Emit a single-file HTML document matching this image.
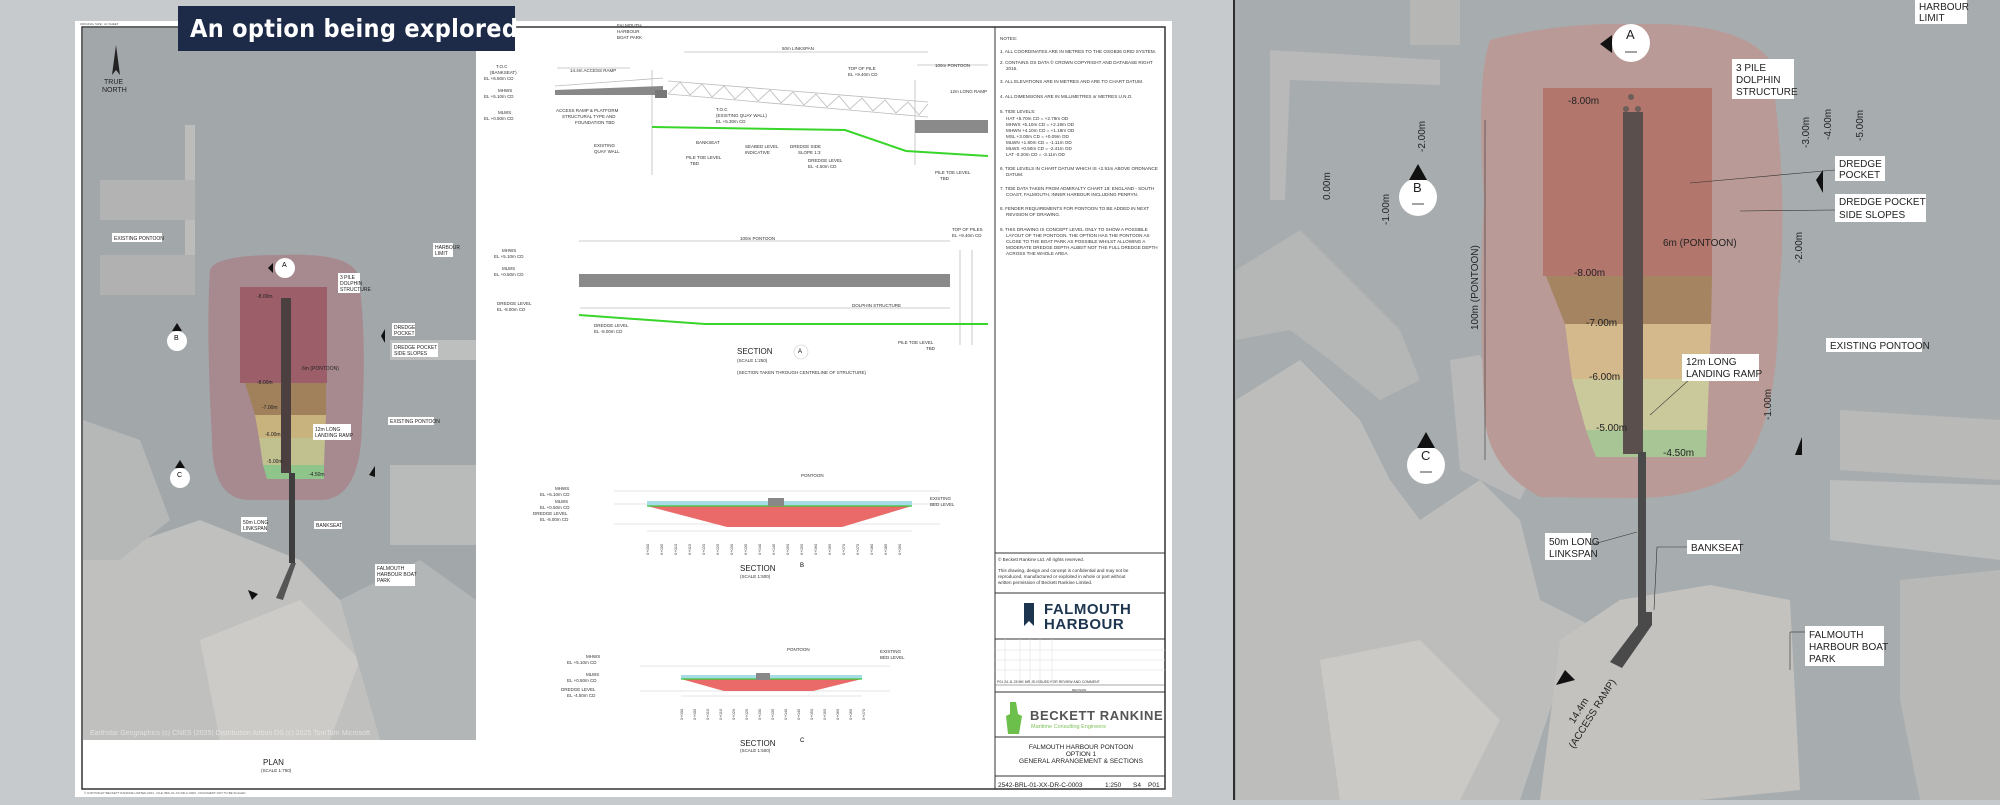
<!DOCTYPE html>
<html><head><meta charset="utf-8"><style>
html,body{margin:0;padding:0;}
body{width:2000px;height:800px;overflow:hidden;background:#c6cacd;font-family:"Liberation Sans",sans-serif;}
svg text{font-family:"Liberation Sans",sans-serif;}
</style></head><body>
<svg width="2000" height="800" viewBox="0 0 2000 800" xmlns="http://www.w3.org/2000/svg">
<rect width="2000" height="800" fill="#c6cacd"/>
<!-- SHEET -->
<rect x="75" y="21" width="1097" height="776" fill="#fff"/>
<rect x="82" y="27" width="1083" height="762" fill="none" stroke="#333" stroke-width="1.5"/>
<text x="80" y="25" font-size="3" fill="#555">ORIGINAL SIZE : A1 SHEET</text>
<text x="84" y="794" font-size="3" fill="#555">© COPYRIGHT BECKETT RANKINE LIMITED 2024 - FILE: BRL-01-XX-DR-C-0003 - DOCUMENT NOT TO BE SCALED</text>

<!-- LEFT PLAN MAP -->
<rect x="83" y="28" width="393" height="712" fill="#a2a7aa"/>
<path d="M83 560 L200 520 L300 560 L380 640 L420 740 L83 740Z" fill="#c0c0bf"/>
<path d="M200 640 L300 600 L360 660 L330 740 L220 740Z" fill="#cdcbc8"/>
<path d="M340 600 L420 560 L476 600 L476 740 L380 740Z" fill="#b3b6b7"/>
<path d="M83 420 L140 440 L170 520 L120 560 L83 560Z" fill="#b6b8b8"/>
<rect x="185" y="125" width="10" height="140" fill="#bcbcbb"/>
<rect x="100" y="180" width="95" height="40" fill="#b3b3b3"/>
<rect x="100" y="255" width="95" height="40" fill="#b1b1b1"/>
<rect x="390" y="465" width="86" height="80" fill="#b9baba"/>
<rect x="390" y="340" width="86" height="20" fill="#bdbebe"/>
<path d="M210 270 Q215 255 280 255 Q350 252 358 275 Q367 330 362 420 Q362 500 320 500 L250 500 Q212 500 212 440 Q206 330 210 270Z" fill="#a7868d" opacity="0.9"/>
<path d="M240 287 L327 287 L327 383 L240 383Z" fill="#9c5f6a"/>
<path d="M245 383 L326 383 L326 415 L255 415Z" fill="#a1815c"/>
<path d="M255 415 L326 415 L325 438 L259 438Z" fill="#c8b27e"/>
<path d="M259 438 L325 438 L324 465 L263 465Z" fill="#c1c190"/>
<path d="M263 465 L324 465 L324 479 L267 479Z" fill="#8fc48a"/>
<rect x="281" y="298" width="10" height="175" fill="#4b3f40"/>
<rect x="289" y="473" width="6" height="90" fill="#3e3e3e"/>
<path d="M291 563 L296 563 L283 600 L276 598Z" fill="#555"/>
<text x="90" y="735" font-size="7" fill="#eee" opacity="0.7">Earthstar Geographics (c) CNES (2025) Distribution Airbus DS (c) 2025 TomTom Microsoft</text>
<!-- north arrow -->
<path d="M116 45 L120 75 L116 70 L112 75Z" fill="#222"/>
<text x="104" y="84" font-size="7" fill="#222">TRUE</text>
<text x="102" y="92" font-size="7" fill="#222">NORTH</text>
<!-- left plan labels -->
<g font-size="5" fill="#222">
<rect x="112" y="233" width="50" height="9" fill="#fff"/><text x="114" y="240">EXISTING PONTOON</text>
<rect x="433" y="243" width="20" height="14" fill="#fff"/><text x="435" y="249">HARBOUR</text><text x="435" y="255">LIMIT</text>
<rect x="338" y="273" width="22" height="20" fill="#fff"/><text x="340" y="279">3 PILE</text><text x="340" y="285">DOLPHIN</text><text x="340" y="291">STRUCTURE</text>
<rect x="392" y="323" width="23" height="13" fill="#fff"/><text x="394" y="329">DREDGE</text><text x="394" y="335">POCKET</text>
<rect x="392" y="343" width="46" height="14" fill="#fff"/><text x="394" y="349">DREDGE POCKET</text><text x="394" y="355">SIDE SLOPES</text>
<rect x="388" y="417" width="46" height="8" fill="#fff"/><text x="390" y="423">EXISTING PONTOON</text>
<rect x="313" y="424" width="38" height="16" fill="#fff"/><text x="315" y="431">12m LONG</text><text x="315" y="437">LANDING RAMP</text>
<rect x="241" y="517" width="26" height="15" fill="#fff"/><text x="243" y="524">50m LONG</text><text x="243" y="530">LINKSPAN</text>
<rect x="314" y="521" width="28" height="8" fill="#fff"/><text x="316" y="527">BANKSEAT</text>
<rect x="375" y="564" width="40" height="22" fill="#fff"/><text x="377" y="570">FALMOUTH</text><text x="377" y="576">HARBOUR BOAT</text><text x="377" y="582">PARK</text>
<text x="257" y="298">-8.00m</text><text x="302" y="370">6m (PONTOON)</text><text x="257" y="384">-8.00m</text>
<text x="262" y="409">-7.00m</text><text x="265" y="436">-6.00m</text><text x="267" y="463">-5.00m</text><text x="309" y="476">-4.50m</text>
</g>
<circle cx="285" cy="268" r="10" fill="#fff"/><text x="282" y="267" font-size="7">A</text><path d="M273 263 L268 268 L273 273Z" fill="#111"/>
<circle cx="177" cy="341" r="10" fill="#fff"/><text x="174" y="340" font-size="7">B</text><path d="M172 331 L177 323 L182 331Z" fill="#111"/>
<circle cx="180" cy="478" r="10" fill="#fff"/><text x="177" y="477" font-size="7">C</text><path d="M175 468 L180 460 L185 468Z" fill="#111"/>
<path d="M381 336 L385 329 L385 343Z" fill="#111"/><path d="M369 475 L375 466 L375 477Z" fill="#111"/><path d="M248 590 L258 594 L252 600Z" fill="#111"/>
<text x="263" y="765" font-size="8" fill="#222">PLAN</text>
<text x="261" y="772" font-size="4.5" fill="#333">(SCALE 1:750)</text>

<!-- SECTION A (long section) -->
<g stroke="#bbb" stroke-width="0.8" fill="none">
<line x1="555" y1="86" x2="663" y2="78"/><line x1="555" y1="94" x2="663" y2="91"/>
<path d="M668 81 L928 102 M668 94 L928 117 M668 94 L680 82 L690 95 L702 84 L712 97 L724 86 L735 99 L747 88 L758 101 L770 90 L781 103 L793 92 L804 105 L816 94 L827 107 L839 96 L850 109 L862 98 L873 111 L885 100 L896 113 L908 102 L919 115 L928 104"/>
<line x1="684" y1="52" x2="928" y2="52"/><line x1="557" y1="68" x2="630" y2="68"/><line x1="917" y1="65" x2="988" y2="65"/>
<line x1="652" y1="70" x2="652" y2="175"/><line x1="915" y1="80" x2="915" y2="165"/><line x1="580" y1="308" x2="950" y2="308"/>
<line x1="579" y1="241" x2="950" y2="241"/><line x1="960" y1="250" x2="960" y2="345"/><line x1="972" y1="250" x2="972" y2="345"/>
</g>
<path d="M555 90 L663 86 L663 95 L555 95Z" fill="#888"/>
<rect x="655" y="90" width="12" height="8" fill="#777"/>
<rect x="915" y="120" width="73" height="13" fill="#8a8a8a"/>
<polyline points="652,127 845,130 906,151 988,156" fill="none" stroke="#38d62a" stroke-width="2"/>
<g font-size="4.5" fill="#333">
<text x="617" y="27">FALMOUTH</text><text x="617" y="33">HARBOUR</text><text x="617" y="39">BOAT PARK</text>
<text x="782" y="50">50m LINKSPAN</text><text x="935" y="67">100m PONTOON</text><text x="570" y="72">14.4m ACCESS RAMP</text>
<text x="496" y="68">T.O.C</text><text x="490" y="74">(BANKSEAT)</text><text x="484" y="80">EL +6.50m CD</text>
<text x="498" y="92">MHWS</text><text x="484" y="98">EL +5.10m CD</text><text x="498" y="114">MLWS</text><text x="484" y="120">EL +0.50m CD</text>
<text x="556" y="112">ACCESS RAMP &amp; PLATFORM</text><text x="562" y="118">STRUCTURAL TYPE AND</text><text x="575" y="124">FOUNDATION TBD</text>
<text x="716" y="111">T.O.C</text><text x="716" y="117">(EXISTING QUAY WALL)</text><text x="716" y="123">EL +5.30m CD</text>
<text x="848" y="70">TOP OF PILE</text><text x="848" y="76">EL +9.40m CD</text><text x="950" y="93">12m LONG RAMP</text>
<text x="594" y="147">EXISTING</text><text x="594" y="153">QUAY WALL</text><text x="696" y="144">BANKSEAT</text>
<text x="745" y="148">SEABED LEVEL</text><text x="745" y="154">INDICATIVE</text><text x="790" y="148">DREDGE SIDE</text><text x="798" y="154">SLOPE 1:3</text>
<text x="686" y="159">PILE TOE LEVEL</text><text x="690" y="165">TBD</text><text x="808" y="162">DREDGE LEVEL</text><text x="808" y="168">EL -4.50m CD</text>
<text x="935" y="174">PILE TOE LEVEL</text><text x="940" y="180">TBD</text>
<text x="952" y="231">TOP OF PILES</text><text x="952" y="237">EL +9.40m CD</text><text x="740" y="240">100m PONTOON</text>
<text x="502" y="252">MHWS</text><text x="494" y="258">EL +5.10m CD</text><text x="502" y="270">MLWS</text><text x="494" y="276">EL +0.50m CD</text>
<text x="497" y="305">DREDGE LEVEL</text><text x="497" y="311">EL -8.00m CD</text><text x="594" y="327">DREDGE LEVEL</text><text x="594" y="333">EL -8.00m CD</text>
<text x="852" y="307">DOLPHIN STRUCTURE</text><text x="898" y="344">PILE TOE LEVEL</text><text x="926" y="350">TBD</text>
<text x="737" y="362">(SCALE 1:250)</text><text x="737" y="374">(SECTION TAKEN THROUGH CENTRELINE OF STRUCTURE)</text>
</g>
<rect x="579" y="274" width="371" height="13" fill="#8a8a8a"/>
<polyline points="579,315 705,324 988,324" fill="none" stroke="#38d62a" stroke-width="2"/>
<text x="737" y="354" font-size="8" fill="#222">SECTION</text>
<circle cx="801" cy="352" r="7" fill="none" stroke="#ccc" stroke-width="0.6"/><text x="798" y="353" font-size="6">A</text>

<!-- SECTION B -->
<g stroke="#ccc" stroke-width="0.6"><line x1="614" y1="491" x2="940" y2="491"/><line x1="614" y1="504" x2="940" y2="504"/><line x1="614" y1="524" x2="940" y2="524"/><line x1="647" y1="531" x2="912" y2="531"/></g>
<rect x="647" y="501" width="265" height="5" fill="#a7dbe6"/>
<path d="M647 506 L912 506 L842 527 L727 527Z" fill="#ea6a6a"/>
<line x1="647" y1="506" x2="912" y2="506" stroke="#3ac93a" stroke-width="1.2"/>
<rect x="768" y="498" width="16" height="8" fill="#888"/>
<g font-size="4.5" fill="#333">
<text x="555" y="490">MHWS</text><text x="540" y="496">EL +5.10m CD</text><text x="555" y="503">MLWS</text><text x="540" y="509">EL +0.50m CD</text>
<text x="533" y="515">DREDGE LEVEL</text><text x="540" y="521">EL -8.00m CD</text><text x="801" y="477">PONTOON</text><text x="930" y="500">EXISTING</text><text x="930" y="506">BED LEVEL</text>
<text x="740" y="752">(SCALE 1:500)</text>
<text x="740" y="578">(SCALE 1:500)</text>
</g>
<g font-size="4" fill="#444">
<text transform="translate(649,555) rotate(-90)">0+000</text><text transform="translate(663,555) rotate(-90)">0+005</text><text transform="translate(677,555) rotate(-90)">0+010</text><text transform="translate(691,555) rotate(-90)">0+015</text><text transform="translate(705,555) rotate(-90)">0+020</text><text transform="translate(719,555) rotate(-90)">0+025</text><text transform="translate(733,555) rotate(-90)">0+030</text><text transform="translate(747,555) rotate(-90)">0+035</text><text transform="translate(761,555) rotate(-90)">0+040</text><text transform="translate(775,555) rotate(-90)">0+045</text><text transform="translate(789,555) rotate(-90)">0+050</text><text transform="translate(803,555) rotate(-90)">0+055</text><text transform="translate(817,555) rotate(-90)">0+060</text><text transform="translate(831,555) rotate(-90)">0+065</text><text transform="translate(845,555) rotate(-90)">0+070</text><text transform="translate(859,555) rotate(-90)">0+075</text><text transform="translate(873,555) rotate(-90)">0+080</text><text transform="translate(887,555) rotate(-90)">0+085</text><text transform="translate(901,555) rotate(-90)">0+090</text>
</g>
<text x="740" y="571" font-size="8" fill="#222">SECTION</text><text x="800" y="567" font-size="6">B</text>

<!-- SECTION C -->
<g stroke="#ccc" stroke-width="0.6"><line x1="640" y1="666" x2="890" y2="666"/><line x1="640" y1="691" x2="890" y2="691"/><line x1="681" y1="696" x2="862" y2="696"/></g>
<rect x="681" y="675" width="181" height="4" fill="#a7dbe6"/>
<path d="M681 679 L862 679 L813 691 L724 691Z" fill="#ea6a6a"/>
<line x1="681" y1="679" x2="862" y2="679" stroke="#3ac93a" stroke-width="1.2"/>
<rect x="756" y="673" width="14" height="7" fill="#888"/>
<g font-size="4.5" fill="#333">
<text x="586" y="658">MHWS</text><text x="567" y="664">EL +5.10m CD</text><text x="586" y="676">MLWS</text><text x="567" y="682">EL +0.50m CD</text>
<text x="561" y="691">DREDGE LEVEL</text><text x="567" y="697">EL -4.50m CD</text><text x="787" y="651">PONTOON</text><text x="880" y="653">EXISTING</text><text x="880" y="659">BED LEVEL</text>
</g>
<g font-size="4" fill="#444">
<text transform="translate(683,720) rotate(-90)">0+000</text><text transform="translate(696,720) rotate(-90)">0+005</text><text transform="translate(709,720) rotate(-90)">0+010</text><text transform="translate(722,720) rotate(-90)">0+015</text><text transform="translate(735,720) rotate(-90)">0+020</text><text transform="translate(748,720) rotate(-90)">0+025</text><text transform="translate(761,720) rotate(-90)">0+030</text><text transform="translate(774,720) rotate(-90)">0+035</text><text transform="translate(787,720) rotate(-90)">0+040</text><text transform="translate(800,720) rotate(-90)">0+045</text><text transform="translate(813,720) rotate(-90)">0+050</text><text transform="translate(826,720) rotate(-90)">0+055</text><text transform="translate(839,720) rotate(-90)">0+060</text><text transform="translate(852,720) rotate(-90)">0+065</text><text transform="translate(865,720) rotate(-90)">0+070</text>
</g>
<text x="740" y="746" font-size="8" fill="#222">SECTION</text><text x="800" y="742" font-size="6">C</text>

<!-- NOTES + TITLE BLOCK -->
<line x1="995" y1="27" x2="995" y2="789" stroke="#333" stroke-width="1"/>
<g stroke="#333" stroke-width="1"><line x1="995" y1="553" x2="1165" y2="553"/><line x1="995" y1="593" x2="1165" y2="593"/><line x1="995" y1="639" x2="1165" y2="639"/><line x1="995" y1="692" x2="1165" y2="692"/><line x1="995" y1="737" x2="1165" y2="737"/><line x1="995" y1="776" x2="1165" y2="776"/></g>
<g stroke="#ddd" stroke-width="0.5"><line x1="995" y1="650" x2="1165" y2="650"/><line x1="995" y1="660" x2="1165" y2="660"/><line x1="995" y1="670" x2="1165" y2="670"/><line x1="1005" y1="639" x2="1005" y2="685"/><line x1="1020" y1="639" x2="1020" y2="685"/><line x1="1030" y1="639" x2="1030" y2="685"/><line x1="1040" y1="639" x2="1040" y2="685"/><line x1="1052" y1="639" x2="1052" y2="685"/></g>
<line x1="995" y1="685" x2="1165" y2="685" stroke="#555" stroke-width="0.6"/>
<g font-size="4.6" fill="#333">
<text x="1000" y="40">NOTES:</text>
<text x="1000" y="53">1.  ALL COORDINATES ARE IN METRES TO THE OSGB36 GRID SYSTEM.</text>
<text x="1000" y="64">2.  CONTAINS OS DATA © CROWN COPYRIGHT AND DATABASE RIGHT</text><text x="1006" y="70">2015.</text>
<text x="1000" y="83">3.  ALL ELEVATIONS ARE IN METRES AND ARE TO CHART DATUM.</text>
<text x="1000" y="98">4.  ALL DIMENSIONS ARE IN MILLIMETRES or METRES U.N.O.</text>
<text x="1000" y="113">5.  TIDE LEVELS:</text>
<text x="1006" y="120">HAT       +5.70m CD     =      +2.79m OD</text>
<text x="1006" y="126">MHWS    +5.10m CD     =      +2.19m OD</text>
<text x="1006" y="132">MHWN    +4.10m CD     =      +1.19m OD</text>
<text x="1006" y="138">MSL       +3.00m CD     =      +0.09m OD</text>
<text x="1006" y="144">MLWN    +1.80m CD     =      -1.11m OD</text>
<text x="1006" y="150">MLWS    +0.50m CD     =      -2.41m OD</text>
<text x="1006" y="156">LAT       -0.20m CD     =      -3.11m OD</text>
<text x="1000" y="170">6.  TIDE LEVELS IN CHART DATUM WHICH IS +2.91m ABOVE ORDNANCE</text><text x="1006" y="176">DATUM.</text>
<text x="1000" y="190">7.  TIDE DATA TAKEN FROM ADMIRALTY CHART 18: ENGLAND - SOUTH</text><text x="1006" y="196">COAST, FALMOUTH, INNER HARBOUR INCLUDING PENRYN.</text>
<text x="1000" y="210">8.  FENDER REQUIREMENTS FOR PONTOON TO BE ADDED IN NEXT</text><text x="1006" y="216">REVISION OF DRAWING.</text>
<text x="1000" y="231">9.  THIS DRAWING IS CONCEPT LEVEL ONLY TO SHOW A POSSIBLE</text><text x="1006" y="237">LAYOUT OF THE PONTOON. THE OPTION HAS THE PONTOON AS</text><text x="1006" y="243">CLOSE TO THE BOAT PARK AS POSSIBLE WHILST ALLOWING A</text><text x="1006" y="249">MODERATE DREDGE DEPTH ALBEIT NOT THE FULL DREDGE DEPTH</text><text x="1006" y="255">ACROSS THE WHOLE AREA.</text>
<text x="998" y="561">© Beckett Rankine Ltd. All rights reserved.</text>
<text x="998" y="572">This drawing, design and concept is confidential and may not be</text>
<text x="998" y="578">reproduced, manufactured or exploited in whole or part without</text>
<text x="998" y="584">written permission of Beckett Rankine Limited.</text>
<text x="997" y="683" font-size="3.5">P01  24.11.25  MK   MR   JD                ISSUED FOR REVIEW AND COMMENT</text>
<text x="1072" y="691" font-size="3">REVISION</text>
</g>
<path d="M1024 603 L1034 603 L1034 626 L1029 621 L1024 626Z" fill="#1e3550"/>
<text x="1044" y="614" font-size="15" font-weight="bold" fill="#1e3550" letter-spacing="0.5">FALMOUTH</text>
<text x="1044" y="629" font-size="15" font-weight="bold" fill="#1e3550" letter-spacing="0.5">HARBOUR</text>
<path d="M1010 702 L1016 702 L1018 714 L1022 716 L1019 734 L1008 734 L1006 716 L1010 714Z" fill="#6bbf4a"/>
<text x="1030" y="720" font-size="13" font-weight="bold" fill="#555" letter-spacing="0.6">BECKETT RANKINE</text>
<text x="1031" y="728" font-size="5.5" fill="#7cc05a">Maritime Consulting Engineers</text>
<g font-size="6.5" fill="#222" text-anchor="middle">
<text x="1081" y="749">FALMOUTH HARBOUR PONTOON</text><text x="1081" y="756">OPTION 1</text><text x="1081" y="763">GENERAL ARRANGEMENT &amp; SECTIONS</text>
</g>
<g font-size="6.5" fill="#222"><text x="998" y="787">2542-BRL-01-XX-DR-C-0003</text><text x="1105" y="787">1:250</text><text x="1133" y="787">S4</text><text x="1148" y="787">P01</text></g>

<!-- BANNER -->
<rect x="178" y="6" width="337" height="45" fill="#1d2b49"/>
<text x="190" y="37" font-size="25" font-weight="bold" fill="#fff" style="font-family:'DejaVu Sans Condensed','Liberation Sans',sans-serif" letter-spacing="0.3">An option being explored</text>

<!-- RIGHT PANEL -->
<rect x="1233" y="0" width="767" height="800" fill="#a7acaf"/>
<line x1="1234" y1="0" x2="1234" y2="800" stroke="#2e2e2e" stroke-width="2"/>
<!-- land/piers -->
<path d="M1270 50 L1440 60 L1440 85 L1290 80 L1285 200 L1270 200Z" fill="#b8b9b8"/>
<path d="M1410 0 L1460 0 L1460 45 L1410 45Z" fill="#b6b6b5"/>
<path d="M1236 270 L1300 230 L1400 330 L1420 380 L1380 400 L1330 360 L1290 330 L1236 340Z" fill="#b5b6b6"/>
<path d="M1236 400 L1300 360 L1360 420 L1390 480 L1420 520 L1480 480 L1520 520 L1540 600 L1600 630 L1560 680 L1520 800 L1236 800Z" fill="#bdbdbc"/>
<path d="M1450 360 L1480 355 L1540 460 L1520 500 L1460 470Z" fill="#b8b9b8"/>
<path d="M1560 640 L1620 600 L1710 585 L1790 600 L1800 790 L1700 800 L1540 800Z" fill="#c3c2bf"/>
<path d="M1320 660 L1420 640 L1500 720 L1460 800 L1340 800Z" fill="#cbc9c5"/>
<path d="M1840 410 L2000 420 L2000 480 L1840 470Z" fill="#b9b9b8"/>
<path d="M1830 480 L2000 485 L2000 560 L1830 540Z" fill="#c2c2c1" opacity="0.8"/>
<path d="M1900 580 L2000 570 L2000 800 L1920 800 L1900 700Z" fill="#b8b8b7"/>
<!-- dredge -->
<path d="M1490 40 Q1560 22 1640 24 Q1740 22 1770 60 Q1790 200 1778 300 Q1780 420 1740 470 Q1700 500 1620 498 L1540 497 Q1490 470 1485 420 Q1478 300 1484 200 Q1476 80 1490 40Z" fill="#b99a96"/>
<path d="M1543 88 L1712 88 L1712 276 L1543 276Z" fill="#b2766c"/>
<path d="M1546 276 L1712 276 L1711 324 L1565 324Z" fill="#a48461"/>
<path d="M1565 324 L1711 324 L1709 379 L1572 379Z" fill="#d3b98b"/>
<path d="M1572 379 L1709 379 L1707 430 L1586 430Z" fill="#cac99b"/>
<path d="M1586 430 L1707 430 L1706 457 L1596 457Z" fill="#a8c695"/>
<rect x="1623" y="112" width="20" height="342" fill="#5b4f4d"/>
<circle cx="1631" cy="97" r="3" fill="#6d5d5b"/><circle cx="1626" cy="109" r="3" fill="#6d5d5b"/><circle cx="1638" cy="109" r="3" fill="#6d5d5b"/>
<rect x="1638" y="452" width="8" height="162" fill="#4a4a4a"/>
<path d="M1638 612 L1652 612 L1652 625 L1622 668 L1610 662 L1638 625Z" fill="#4a4a4a"/>
<!-- markers -->
<circle cx="1631" cy="43" r="19" fill="#fff"/><text x="1626" y="39" font-size="13" fill="#222">A</text><line x1="1625" y1="52" x2="1637" y2="52" stroke="#444"/>
<path d="M1612 35 L1600 44 L1612 53Z" fill="#111"/>
<circle cx="1418" cy="197" r="19" fill="#fff"/><text x="1413" y="192" font-size="13" fill="#222">B</text><line x1="1412" y1="204" x2="1424" y2="204" stroke="#444"/>
<path d="M1409 180 L1418 164 L1427 180Z" fill="#111"/>
<circle cx="1426" cy="465" r="19" fill="#fff"/><text x="1421" y="460" font-size="13" fill="#222">C</text><line x1="1420" y1="472" x2="1432" y2="472" stroke="#444"/>
<path d="M1417 448 L1426 432 L1435 448Z" fill="#111"/>
<path d="M1816 180 L1823 170 L1823 193Z" fill="#111"/>
<path d="M1795 455 L1802 437 L1802 455Z" fill="#111"/>
<path d="M1556 685 L1575 680 L1565 670Z" fill="#111"/>
<g stroke="#333" stroke-width="0.6" fill="none"><line x1="1485" y1="120" x2="1485" y2="460"/><line x1="1760" y1="70" x2="1732" y2="80"/><line x1="1835" y1="170" x2="1690" y2="183"/><line x1="1835" y1="210" x2="1740" y2="211"/><line x1="1590" y1="545" x2="1637" y2="532"/><line x1="1687" y1="547" x2="1657" y2="547"/><line x1="1657" y1="547" x2="1654" y2="610"/><line x1="1805" y1="632" x2="1790" y2="632"/><line x1="1790" y1="632" x2="1790" y2="670"/><line x1="1700" y1="370" x2="1650" y2="415"/></g>
<g font-size="10" fill="#222">
<rect x="1915" y="0" width="52" height="24" fill="#fff"/><text x="1919" y="10">HARBOUR</text><text x="1919" y="21">LIMIT</text>
<rect x="1732" y="59" width="62" height="40" fill="#fff"/><text x="1736" y="71">3 PILE</text><text x="1736" y="83">DOLPHIN</text><text x="1736" y="95">STRUCTURE</text>
<rect x="1835" y="156" width="50" height="25" fill="#fff"/><text x="1839" y="167">DREDGE</text><text x="1839" y="178">POCKET</text>
<rect x="1835" y="194" width="91" height="28" fill="#fff"/><text x="1839" y="205">DREDGE POCKET</text><text x="1839" y="218">SIDE SLOPES</text>
<rect x="1826" y="338" width="96" height="14" fill="#fff"/><text x="1830" y="349">EXISTING PONTOON</text>
<rect x="1682" y="354" width="77" height="27" fill="#fff"/><text x="1686" y="365">12m LONG</text><text x="1686" y="377">LANDING RAMP</text>
<rect x="1545" y="533" width="46" height="27" fill="#fff"/><text x="1549" y="545">50m LONG</text><text x="1549" y="557">LINKSPAN</text>
<rect x="1687" y="540" width="53" height="14" fill="#fff"/><text x="1691" y="551">BANKSEAT</text>
<rect x="1805" y="626" width="79" height="40" fill="#fff"/><text x="1809" y="638">FALMOUTH</text><text x="1809" y="650">HARBOUR BOAT</text><text x="1809" y="662">PARK</text>
<text x="1568" y="104">-8.00m</text><text x="1574" y="276">-8.00m</text><text x="1586" y="326">-7.00m</text><text x="1589" y="380">-6.00m</text><text x="1596" y="431">-5.00m</text><text x="1663" y="456">-4.50m</text>
<text x="1663" y="246">6m (PONTOON)</text>
<text transform="translate(1330,200) rotate(-90)">0.00m</text>
<text transform="translate(1389,225) rotate(-90)">-1.00m</text>
<text transform="translate(1425,152) rotate(-90)">-2.00m</text>
<text transform="translate(1478,330) rotate(-90)">100m (PONTOON)</text>
<text transform="translate(1809,148) rotate(-90)">-3.00m</text>
<text transform="translate(1831,140) rotate(-90)">-4.00m</text>
<text transform="translate(1863,141) rotate(-90)">-5.00m</text>
<text transform="translate(1802,263) rotate(-90)">-2.00m</text>
<text transform="translate(1771,420) rotate(-90)">-1.00m</text>
<text transform="translate(1574,724) rotate(-58)">14.4m</text>
<text transform="translate(1574,749) rotate(-58)">(ACCESS RAMP)</text>
</g>
</svg>
</body></html>
